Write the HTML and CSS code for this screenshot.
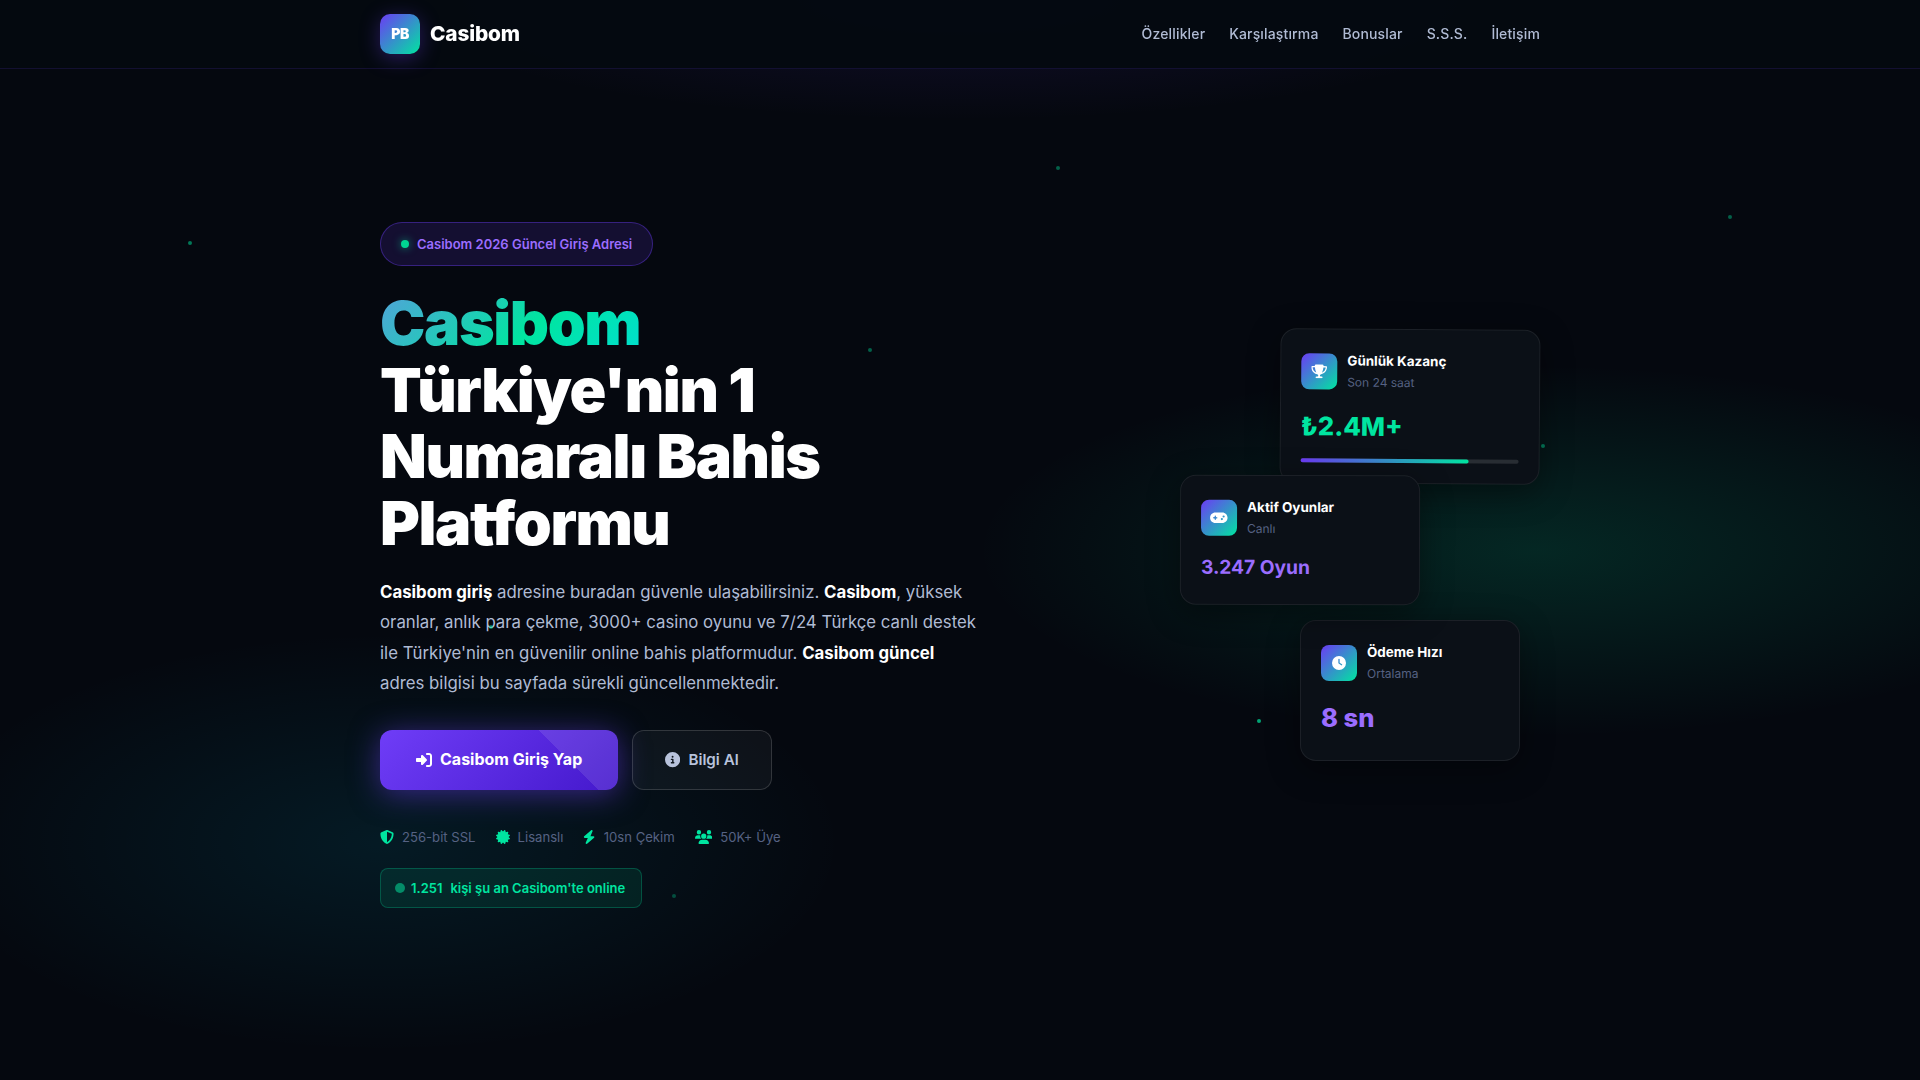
FILE: index.html
```html
<!DOCTYPE html>
<html lang="tr">
<head>
    <meta charset="UTF-8">
    <meta name="viewport" content="width=device-width, initial-scale=1.0">
    <title>Casibom</title>
    <link rel="stylesheet" href="styles.css">
</head>
<body>
    <header class="navbar">
      <div class="container nav-inner">
        <a class="logo" href="#">
          <span class="logo-icon">PB</span>
          <span class="logo-text">Casibom</span>
        </a>
        <nav class="nav-links">
          <a href="#ozellikler">Özellikler</a>
          <a href="#karsilastirma">Karşılaştırma</a>
          <a href="#bonuslar">Bonuslar</a>
          <a href="#sss">S.S.S.</a>
          <a href="#iletisim">İletişim</a>
        </nav>
      </div>
    </header>

    <section class="hero">
      <div class="container hero-grid">
        <div class="hero-content">
          <div class="hero-badge"><span class="badge-dot"></span>Casibom 2026 Güncel Giriş Adresi</div>
          <h1><span class="gradient-text">Casibom</span><br>Türkiye'nin 1 Numaralı Bahis Platformu</h1>
          <p class="hero-desc"><strong>Casibom giriş</strong> adresine buradan güvenle ulaşabilirsiniz. <strong>Casibom</strong>, yüksek oranlar, anlık para çekme, 3000+ casino oyunu ve 7/24 Türkçe canlı destek ile Türkiye'nin en güvenilir online bahis platformudur. <strong>Casibom güncel</strong> adres bilgisi bu sayfada sürekli güncellenmektedir.</p>

          <div class="hero-buttons">
            <a class="btn btn-primary" href="#">
              <svg class="icon" viewBox="0 0 512 512"><path d="M217.9 105.9L340.7 228.7c7.2 7.2 11.3 17.1 11.3 27.3s-4.1 20.1-11.3 27.3L217.9 406.1c-6.4 6.4-15 9.9-24 9.9c-18.7 0-33.9-15.2-33.9-33.9l0-62.1L32 320c-17.7 0-32-14.3-32-32l0-64c0-17.7 14.3-32 32-32l128 0 0-62.1c0-18.7 15.2-33.9 33.9-33.9c9 0 17.6 3.6 24 9.9zM352 416l64 0c17.7 0 32-14.3 32-32l0-256c0-17.7-14.3-32-32-32l-64 0c-17.7 0-32-14.3-32-32s14.3-32 32-32l64 0c53 0 96 43 96 96l0 256c0 53-43 96-96 96l-64 0c-17.7 0-32-14.3-32-32s14.3-32 32-32z"/></svg>
              Casibom Giriş Yap
            </a>
            <a class="btn btn-outline" href="#">
              <svg class="icon" viewBox="0 0 512 512"><path d="M256 512A256 256 0 1 0 256 0a256 256 0 1 0 0 512zM216 336h24V272H216c-13.3 0-24-10.7-24-24s10.7-24 24-24h48c13.3 0 24 10.7 24 24v88h8c13.3 0 24 10.7 24 24s-10.7 24-24 24H216c-13.3 0-24-10.7-24-24s10.7-24 24-24zm40-208a32 32 0 1 1 0 64 32 32 0 1 1 0-64z"/></svg>
              Bilgi Al
            </a>
          </div>

          <div class="hero-trust">
            <span class="trust-item">
              <svg class="icon" viewBox="0 0 512 512"><path d="M256 0c4.6 0 9.2 1 13.4 2.9L457.7 82.8c22 9.3 38.4 31 38.3 57.2c-.5 99.2-41.3 280.7-213.6 363.2c-16.7 8-36.1 8-52.8 0C57.3 420.7 16.5 239.2 16 140c-.1-26.2 16.3-47.9 38.3-57.2L242.7 2.9C246.8 1 251.4 0 256 0zm0 66.8V444.8C394 378 431.1 230.1 432 141.4L256 66.8l0 0z"/></svg>
              256-bit SSL
            </span>
            <span class="trust-item">
              <svg class="icon" viewBox="0 0 512 512"><path d="M211 7.3C205 1 196-1.4 187.6 .8s-14.9 8.9-17.1 17.3L154.7 80.6l-62-17.5c-8.4-2.4-17.4 0-23.5 6.1s-8.5 15.1-6.1 23.5l17.5 62L18.1 170.6c-8.4 2.1-15 8.7-17.3 17.1S1 205 7.3 211l46.2 45L7.3 301C1 307-1.4 316 .8 324.4s8.9 14.9 17.3 17.1l62.5 15.8-17.5 62c-2.4 8.4 0 17.4 6.1 23.5s15.1 8.5 23.5 6.1l62-17.5 15.8 62.5c2.1 8.4 8.7 15 17.1 17.3s17.3-.2 23.4-6.4l45-46.2 45 46.2c6.1 6.2 15 8.7 23.4 6.4s14.9-8.9 17.1-17.3l15.8-62.5 62 17.5c8.4 2.4 17.4 0 23.5-6.1s8.5-15.1 6.1-23.5l-17.5-62 62.5-15.8c8.4-2.1 15-8.7 17.3-17.1s-.2-17.3-6.4-23.4l-46.2-45 46.2-45c6.2-6.1 8.7-15 6.4-23.4s-8.9-14.9-17.3-17.1l-62.5-15.8 17.5-62c2.4-8.4 0-17.4-6.1-23.5s-15.1-8.5-23.5-6.1l-62 17.5L341.4 18.1c-2.1-8.4-8.7-15-17.1-17.3S307 1 301 7.3L256 53.5 211 7.3z"/></svg>
              Lisanslı
            </span>
            <span class="trust-item">
              <svg class="icon" viewBox="0 0 448 512"><path d="M349.4 44.6c5.9-13.7 1.5-29.7-10.6-38.5s-28.6-8-39.9 1.8l-256 224c-10 8.8-13.6 22.9-8.9 35.3S50.7 288 64 288H175.5L98.6 467.4c-5.9 13.7-1.5 29.7 10.6 38.5s28.6 8 39.9-1.8l256-224c10-8.8 13.6-22.9 8.9-35.3s-16.6-20.7-30-20.7H272.5L349.4 44.6z"/></svg>
              10sn Çekim
            </span>
            <span class="trust-item">
              <svg class="icon" viewBox="0 0 640 512"><path d="M144 0a80 80 0 1 1 0 160A80 80 0 1 1 144 0zM512 0a80 80 0 1 1 0 160A80 80 0 1 1 512 0zM0 298.7C0 239.8 47.8 192 106.7 192h42.7c15.9 0 31 3.5 44.6 9.7c-1.3 7.2-1.9 14.7-1.9 22.3c0 38.2 16.8 72.5 43.3 96c-.2 0-.4 0-.7 0H21.3C9.6 320 0 310.4 0 298.7zM405.3 320c-.2 0-.4 0-.7 0c26.6-23.5 43.3-57.8 43.3-96c0-7.6-.7-15-1.9-22.3c13.6-6.3 28.7-9.7 44.6-9.7h42.7C592.2 192 640 239.8 640 298.7c0 11.8-9.6 21.3-21.3 21.3H405.3zM224 224a96 96 0 1 1 192 0 96 96 0 1 1 -192 0zM128 485.3C128 411.7 187.7 352 261.3 352H378.7C452.3 352 512 411.7 512 485.3c0 14.7-11.9 26.7-26.7 26.7H154.7c-14.7 0-26.7-11.9-26.7-26.7z"/></svg>
              50K+ Üye
            </span>
          </div>

          <div class="online-box"><span class="online-dot"></span><span class="online-count">1.251</span>kişi şu an Casibom'te online</div>
        </div>

        <div class="hero-visual">
          <div class="float-card card-win">
            <div class="card-head">
              <div class="card-icon"><svg class="icon" viewBox="0 0 576 512"><path d="M400 0H176c-26.5 0-48.1 21.8-47.1 48.2c.2 5.3 .4 10.6 .7 15.8H24C10.7 64 0 74.7 0 88c0 92.6 33.5 157 78.5 200.7c44.3 43.1 98.3 64.8 138.1 75.8c23.4 6.5 39.4 26 39.4 45.6c0 20.9-17 37.9-37.9 37.9H192c-17.7 0-32 14.3-32 32s14.3 32 32 32H384c17.7 0 32-14.3 32-32s-14.3-32-32-32H357.9C337 448 320 431 320 410.1c0-19.6 15.9-39.2 39.4-45.6c39.9-11 93.9-32.7 138.2-75.8C542.5 245 576 180.6 576 88c0-13.3-10.7-24-24-24H446.4c.3-5.2 .5-10.4 .7-15.8C448.1 21.8 426.5 0 400 0zM48.9 112h84.4c9.1 90.1 29.2 150.3 51.9 190.6c-24.9-11-50.8-26.5-73.2-48.3c-32-31.1-58-76-63-142.3zM464.1 254.3c-22.4 21.8-48.3 37.3-73.2 48.3c22.7-40.3 42.8-100.5 51.9-190.6h84.4c-5.1 66.3-31.1 111.2-63 142.3z"/></svg></div>
              <div>
                <div class="card-title">Günlük Kazanç</div>
                <div class="card-sub">Son 24 saat</div>
              </div>
            </div>
            <div class="card-value green">₺2.4M+</div>
            <div class="card-bar"><div class="card-bar-fill"></div></div>
          </div>

          <div class="float-card card-games">
            <div class="card-head">
              <div class="card-icon"><svg class="icon" viewBox="0 0 640 512"><path d="M192 64C86 64 0 150 0 256S86 448 192 448H448c106 0 192-86 192-192s-86-192-192-192H192zM496 168a40 40 0 1 1 0 80 40 40 0 1 1 0-80zM392 304a40 40 0 1 1 80 0 40 40 0 1 1 -80 0zM168 200c0-13.3 10.7-24 24-24s24 10.7 24 24v32h32c13.3 0 24 10.7 24 24s-10.7 24-24 24H216v32c0 13.3-10.7 24-24 24s-24-10.7-24-24V280H136c-13.3 0-24-10.7-24-24s10.7-24 24-24h32V200z"/></svg></div>
              <div>
                <div class="card-title">Aktif Oyunlar</div>
                <div class="card-sub">Canlı</div>
              </div>
            </div>
            <div class="card-value small">3.247 Oyun</div>
          </div>

          <div class="float-card card-speed">
            <div class="card-head">
              <div class="card-icon"><svg class="icon" viewBox="0 0 512 512"><path d="M256 0a256 256 0 1 1 0 512A256 256 0 1 1 256 0zM232 120V256c0 8 4 15.5 10.7 20l96 64c11 7.4 25.9 4.4 33.3-6.7s4.4-25.9-6.7-33.3L280 243.2V120c0-13.3-10.7-24-24-24s-24 10.7-24 24z"/></svg></div>
              <div>
                <div class="card-title">Ödeme Hızı</div>
                <div class="card-sub">Ortalama</div>
              </div>
            </div>
            <div class="card-value">8 sn</div>
          </div>
        </div>
      </div>

      <span class="particle p1"></span>
      <span class="particle p2"></span>
      <span class="particle p3"></span>
      <span class="particle p4"></span>
      <span class="particle p5"></span>
      <span class="particle p6"></span>
      <span class="particle p7"></span>
      <span class="particle p8"></span>
    </section>
</body>
</html>
```
FILE: styles.css
```css
:root {
  --bg: #05080f;
  --purple: #6c3bf5;
  --purple-light: #9b6dff;
  --green: #00e5a0;
  --text: #b0bbd4;
  --muted: #566283;
}
* {
  box-sizing: border-box;
  margin: 0;
  padding: 0;
}
body {
  font-family: Inter, "Liberation Sans", sans-serif;
  line-height: 1.7;
  background: var(--bg);
  color: #fff;
  overflow: hidden;
}
a {
  color: inherit;
  text-decoration: none;
}
.icon {
  height: 1em;
  fill: currentColor;
  flex-shrink: 0;
}
.container {
  width: 100%;
  max-width: 1200px;
  margin: 0 auto;
  padding: 0 20px;
}

/* navbar */
.navbar {
  position: fixed;
  top: 0;
  left: 0;
  right: 0;
  z-index: 10;
  background: rgba(4, 9, 16, 0.95);
  border-bottom: 1px solid rgba(108, 59, 245, 0.15);
}
.nav-inner {
  display: flex;
  align-items: center;
  justify-content: space-between;
  height: 68px;
}
.logo {
  display: flex;
  align-items: center;
  gap: 10px;
}
.logo-icon {
  display: flex;
  align-items: center;
  justify-content: center;
  width: 40px;
  height: 40px;
  border-radius: 10px;
  background: linear-gradient(135deg, var(--purple), var(--green));
  box-shadow: 0 4px 20px rgba(108, 59, 245, 0.35);
  font-size: 14px;
  font-weight: 900;
  letter-spacing: -0.5px;
}
.logo-text {
  font-size: 1.3rem;
  font-weight: 800;
  letter-spacing: -0.15px;
}
.nav-links {
  display: flex;
  gap: 24px;
  font-size: 14px;
  font-weight: 500;
  letter-spacing: 0.15px;
  color: var(--text);
}

/* hero */
.hero {
  position: relative;
  display: flex;
  align-items: center;
  min-height: 100vh;
  padding: 110px 0 60px;
  background:
    radial-gradient(ellipse 560px 120px at 50% 0, rgba(108, 59, 245, 0.13), transparent),
    radial-gradient(ellipse 560px 186px at 80% 51%, rgba(0, 229, 160, 0.14), transparent),
    radial-gradient(ellipse 460px 210px at 20% 78%, rgba(0, 212, 255, 0.09), transparent);
}
.hero-grid {
  display: flex;
  align-items: center;
  justify-content: space-between;
}
.hero-content {
  width: 600px;
}
.hero-badge {
  display: inline-flex;
  align-items: center;
  gap: 8px;
  padding: 10px 20px;
  margin-bottom: 24px;
  border: 1px solid rgba(108, 59, 245, 0.4);
  border-radius: 50px;
  background: rgba(108, 59, 245, 0.15);
  color: var(--purple-light);
  font-size: 13px;
  font-weight: 600;
}
.badge-dot {
  width: 8px;
  height: 8px;
  border-radius: 50%;
  background: #00d492;
  box-shadow: 0 0 8px rgba(0, 229, 160, 0.6);
}
h1 {
  margin-bottom: 20px;
  font-size: 3.8rem;
  font-weight: 900;
  line-height: 1.1;
  letter-spacing: -1.4px;
}
.gradient-text {
  background: linear-gradient(135deg, #55a0dc 0%, var(--green) 58%, #00dfd0 100%);
  -webkit-background-clip: text;
  background-clip: text;
  color: transparent;
}
.hero-desc {
  margin-bottom: 32px;
  font-size: 1.05rem;
  line-height: 1.8;
  color: var(--text);
}
.hero-desc strong {
  color: #fff;
  font-weight: 700;
}
.hero-buttons {
  display: flex;
  gap: 14px;
  margin-bottom: 36px;
}
.btn {
  display: flex;
  align-items: center;
  gap: 8px;
  height: 60px;
  border-radius: 12px;
}
.btn-primary {
  padding: 0 36px;
  background:
    linear-gradient(45deg, transparent 73.2%, rgba(255, 255, 255, 0.1) 73.4%),
    linear-gradient(135deg, #6f3df7, #4418cc);
  box-shadow: 0 4px 30px rgba(108, 59, 245, 0.5);
  font-size: 16px;
  font-weight: 700;
}
.btn-outline {
  padding: 0 32px;
  border: 1px solid rgba(255, 255, 255, 0.15);
  background: rgba(255, 255, 255, 0.04);
  color: #b8c3dc;
  font-size: 0.95rem;
  font-weight: 600;
}
.hero-trust {
  display: flex;
  gap: 20px;
  margin-bottom: 20px;
}
.trust-item {
  display: flex;
  align-items: center;
  gap: 8px;
  font-size: 0.82rem;
  color: var(--muted);
}
.trust-item .icon {
  height: 14px;
  color: var(--green);
}
.online-box {
  display: inline-flex;
  align-items: center;
  padding: 8px 16px 8px 14px;
  border: 1px solid rgba(0, 229, 160, 0.25);
  border-radius: 8px;
  background: rgba(0, 229, 160, 0.09);
  color: var(--green);
  font-size: 13px;
  font-weight: 600;
}
.online-dot {
  width: 10px;
  height: 10px;
  margin-right: 6px;
  border-radius: 50%;
  background: #048c68;
}
.online-count {
  margin-right: 8px;
}

/* floating cards */
.hero-visual {
  display: flex;
  flex-direction: column;
  width: 360px;
  margin-bottom: 40px;
}
.float-card {
  padding: 20px;
  border: 1px solid rgba(255, 255, 255, 0.07);
  border-radius: 16px;
  background: #0b1017;
  box-shadow: 0 8px 32px rgba(0, 0, 0, 0.4);
}
.card-win {
  align-self: flex-end;
  width: 260px;
  transform: rotate(0.42deg);
}
.card-games {
  width: 240px;
  margin-top: -9px;
  transform: rotate(0.15deg);
}
.card-speed {
  width: 220px;
  margin: 15px 0 0 120px;
}
.card-head {
  display: flex;
  align-items: center;
  gap: 10px;
  margin-bottom: 12px;
}
.card-icon {
  display: flex;
  align-items: center;
  justify-content: center;
  width: 36px;
  height: 36px;
  border-radius: 8px;
  background: linear-gradient(135deg, var(--purple), var(--green));
  font-size: 14px;
}
.card-title {
  font-size: 0.84rem;
  font-weight: 700;
}
.card-sub {
  font-size: 0.75rem;
  color: var(--muted);
}
.card-value {
  font-size: 1.6rem;
  font-weight: 800;
  color: var(--purple-light);
}
.card-value.green {
  color: var(--green);
}
.card-value.small {
  font-size: 1.2rem;
  font-weight: 700;
}
.card-bar {
  height: 4px;
  margin-top: 10px;
  border-radius: 2px;
  background: rgba(255, 255, 255, 0.12);
}
.card-bar-fill {
  width: 77%;
  height: 100%;
  border-radius: 2px;
  background: linear-gradient(90deg, var(--purple), var(--green));
}

.particle {
  position: absolute;
  width: 4px;
  height: 4px;
  border-radius: 50%;
  background: var(--green);
  opacity: 0.5;
}
.p1 { left: 188px; top: 241px; }
.p2 { left: 1056px; top: 166px; opacity: 0.4; }
.p3 { left: 1728px; top: 215px; opacity: 0.4; }
.p4 { left: 868px; top: 348px; opacity: 0.4; }
.p5 { left: 1541px; top: 444px; opacity: 0.4; }
.p6 { left: 489px; top: 625px; }
.p7 { left: 1257px; top: 719px; opacity: 0.7; }
.p8 { left: 672px; top: 894px; opacity: 0.3; }
```
